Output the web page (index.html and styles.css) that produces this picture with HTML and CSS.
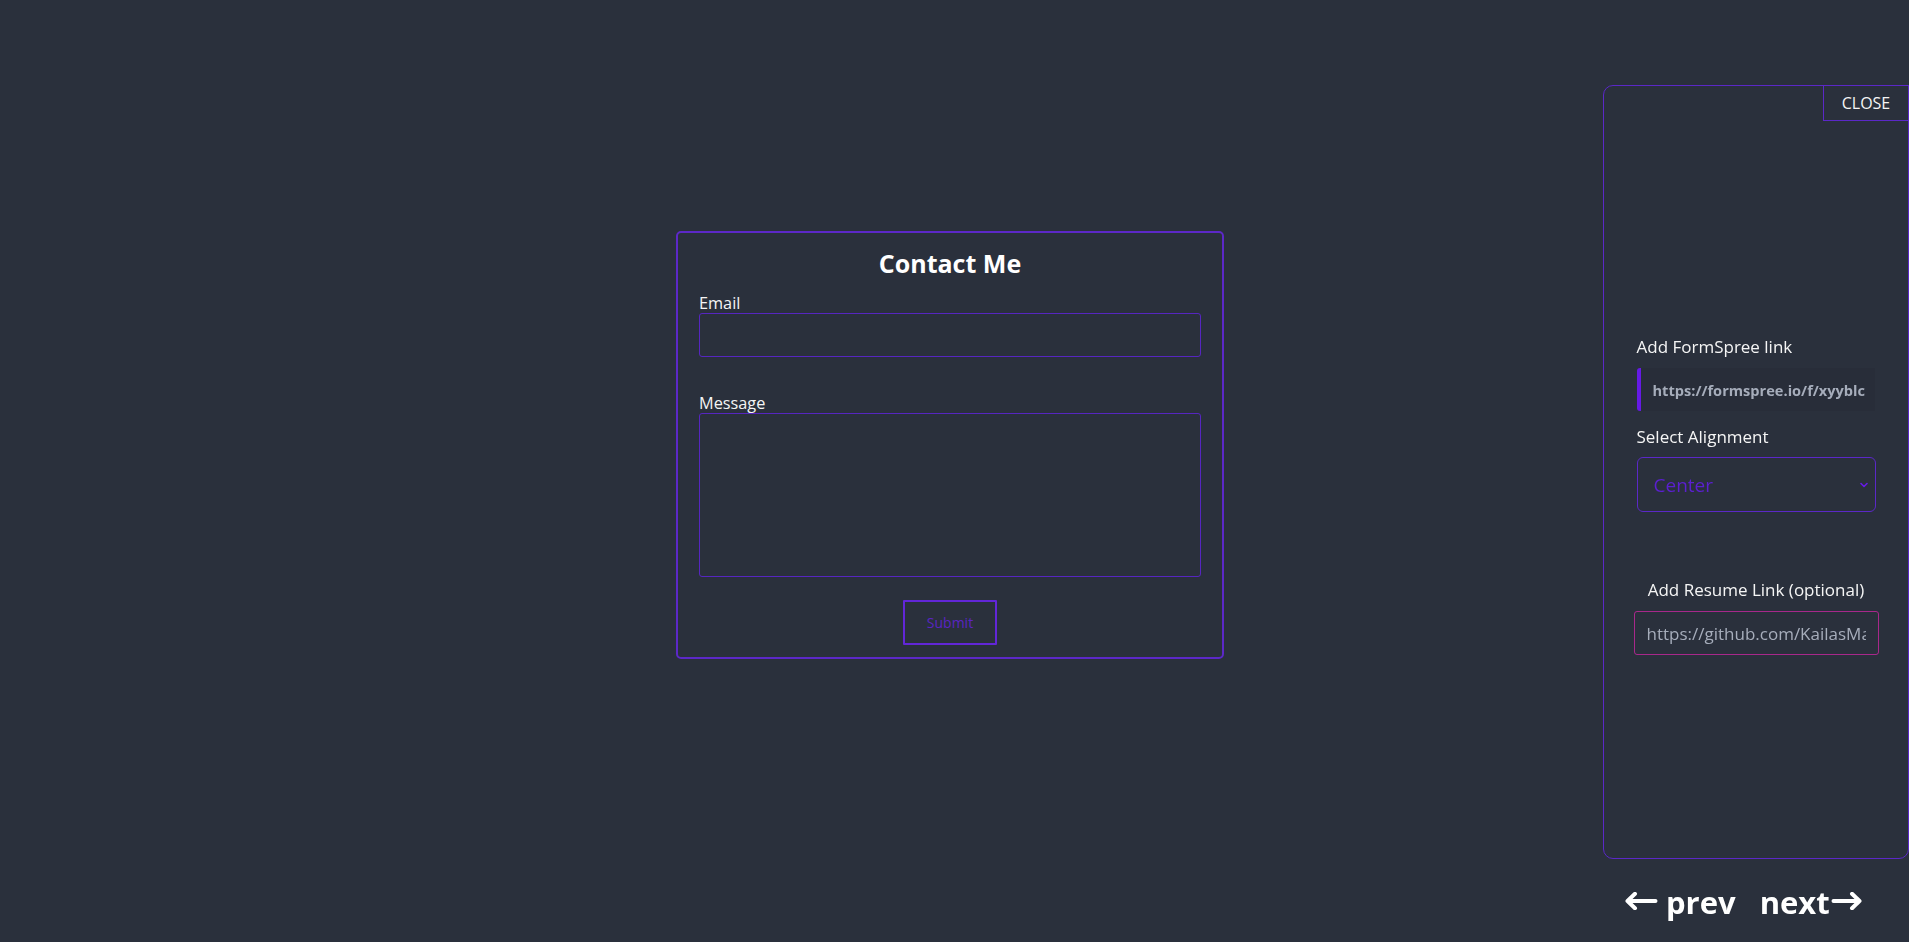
FILE: index.html
```html
<!DOCTYPE html>
<html lang="en">
<head>
<meta charset="utf-8">
<title>Contact Me</title>
<link rel="stylesheet" href="styles.css">
</head>
<body>
<main class="stage">
  <form class="contact-card">
    <h2 class="contact-title">Contact Me</h2>
    <label class="field-label" for="email">Email</label>
    <input class="field-input" id="email" type="email">
    <label class="field-label message-label" for="message">Message</label>
    <textarea class="field-area" id="message"></textarea>
    <div class="submit-row">
      <button class="submit-btn" type="button">Submit</button>
    </div>
  </form>
</main>

<aside class="drawer">
  <div class="panel">
    <button class="close-btn" type="button">CLOSE</button>
    <div class="settings">
      <label class="side-label">Add FormSpree link</label>
      <input class="link-input" type="text" value="https://formspree.io/f/xyyblcqk">
      <label class="side-label align-label">Select Alignment</label>
      <div class="select-wrap">
        <select class="align-select">
          <option>Center</option>
          <option>Left</option>
          <option>Right</option>
        </select>
        <svg class="chevron" width="8" height="6" viewBox="0 0 8 6"><path d="M1 1.5l3 3 3-3" fill="none" stroke="#661ae6" stroke-width="1.6" stroke-linecap="round" stroke-linejoin="round"/></svg>
      </div>
      <div class="resume">
        <label class="side-label resume-label">Add Resume Link (optional)</label>
        <input class="resume-input" type="text" placeholder="https://github.com/KailasMahavarkar/resume">
      </div>
    </div>
  </div>
  <nav class="pager">
    <button class="pager-btn" type="button">
      <svg width="34" height="18" viewBox="0 0 34 18"><path d="M31.5 9H3.5M11 1.8L3.5 9l7.5 7.2" fill="none" stroke="#fff" stroke-width="4" stroke-linecap="round" stroke-linejoin="round"/></svg>
      <span>prev</span>
    </button>
    <button class="pager-btn next" type="button">
      <span>next</span>
      <svg width="32" height="18" viewBox="0 0 32 18"><path d="M2.5 9h26M21 1.8L28.5 9 21 16.2" fill="none" stroke="#fff" stroke-width="4" stroke-linecap="round" stroke-linejoin="round"/></svg>
    </button>
  </nav>
</aside>
</body>
</html>
```

FILE: styles.css
```css
* { box-sizing: border-box; }

html, body {
  margin: 0;
  padding: 0;
  background: #2a303c;
  height: 100%;
  overflow: hidden;
}

body {
  font-family: "Open Sans", "Noto Sans", sans-serif;
  color: #f2f2f2;
}

.stage {
  width: 1900px;
  display: flex;
  justify-content: center;
  padding-top: 231px;
}

.contact-card {
  width: 548px;
  height: 428px;
  border: 2px solid #5c28c8;
  border-radius: 5px;
  padding: 13px 21px 12px;
  display: flex;
  flex-direction: column;
}

.contact-title {
  margin: 0 0 13px;
  text-align: center;
  font-size: 25px;
  font-weight: 700;
  line-height: 34px;
  color: #ffffff;
}

.field-label {
  display: block;
  font-size: 16.3px;
  line-height: 20px;
  color: #f5f5f5;
}

.message-label { margin-top: 36px; }

.field-input,
.field-area {
  display: block;
  width: 100%;
  background: transparent;
  border: 1px solid #5626c0;
  border-radius: 3px;
  color: #f2f2f2;
  font-family: inherit;
  font-size: 16px;
  outline: none;
}

.field-input { height: 44px; }

.field-area {
  height: 164px;
  resize: none;
}

.submit-row {
  display: flex;
  justify-content: center;
  margin-top: 23px;
}

.submit-btn {
  width: 94px;
  height: 45px;
  background: transparent;
  border: 2px solid #6226d8;
  border-radius: 1px;
  color: #5a24c2;
  font-family: inherit;
  font-size: 14px;
  padding: 0;
}

/* drawer */
.drawer {
  position: fixed;
  top: 85px;
  left: 1603px;
  width: 306px;
}

.panel {
  position: relative;
  height: 774px;
  border: 1px solid #5b28c8;
  border-radius: 10px;
  padding-top: 248px;
}

.close-btn {
  position: absolute;
  top: -1px;
  right: -1px;
  width: 86px;
  height: 36px;
  background: #2a303c;
  border: 1px solid #5b28c8;
  color: #f5f5f5;
  font-family: inherit;
  font-size: 16px;
  padding: 0;
}

.settings {
  width: 239px;
  margin: 0 auto;
  display: flex;
  flex-direction: column;
}

.side-label {
  display: block;
  font-size: 17px;
  line-height: 25px;
  color: #f5f5f5;
}

.link-input {
  margin-top: 9px;
  height: 43px;
  width: 238px;
  background: #282d39;
  border: none;
  border-left: 4px solid #661ae6;
  border-radius: 3px 0 0 3px;
  padding: 0 10px 0 12px;
  color: #a6adbb;
  font-family: inherit;
  font-weight: 700;
  font-size: 14.6px;
  outline: none;
}

.align-label { margin-top: 13px; }

.select-wrap {
  position: relative;
  margin-top: 8px;
}

.align-select {
  display: block;
  width: 239px;
  height: 55px;
  appearance: none;
  -webkit-appearance: none;
  background: transparent;
  border: 1px solid #5b28c8;
  border-radius: 6px;
  padding: 0 0 0 16px;
  color: #5b1fd0;
  font-family: inherit;
  font-size: 19px;
  outline: none;
}

.chevron {
  position: absolute;
  right: 8px;
  top: 25px;
}

.resume {
  margin-top: 65px;
  display: flex;
  flex-direction: column;
  align-items: center;
}

.resume-label { text-align: center; }

.resume-input {
  margin-top: 9px;
  width: 245px;
  height: 44px;
  background: transparent;
  border: 1px solid rgba(217, 38, 170, 0.72);
  border-radius: 3px;
  padding: 0 12px;
  color: #a6adbb;
  font-family: inherit;
  font-size: 17px;
  outline: none;
}

.resume-input::placeholder { color: #a6adbb; }

.pager {
  display: flex;
  align-items: center;
  gap: 24px;
  padding: 22px 0 0 21px;
}

.pager-btn {
  display: flex;
  align-items: center;
  gap: 8px;
  background: transparent;
  border: none;
  padding: 0;
  color: #ffffff;
  font-family: inherit;
  font-weight: 700;
  font-size: 31px;
  line-height: 42px;
}

.pager-btn svg { margin-top: -3px; }

.pager-btn.next { gap: 1px; }
```
